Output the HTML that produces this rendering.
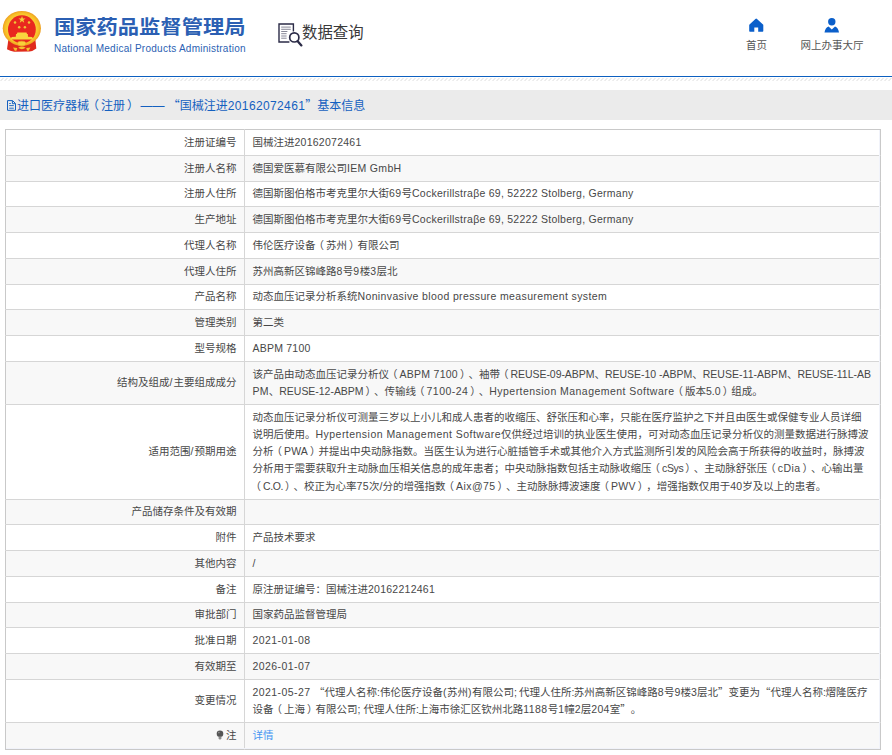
<!DOCTYPE html>
<html lang="zh-CN">
<head>
<meta charset="utf-8">
<title>国家药品监督管理局 数据查询</title>
<style>
html,body{margin:0;padding:0;background:#fff;}
body{width:892px;height:755px;overflow:hidden;position:relative;
  font-family:"Liberation Sans","Noto Sans CJK SC",sans-serif;font-size:10.5px;color:#474747;text-spacing-trim:space-all;}
.abs{position:absolute;white-space:nowrap;}
#emblem{left:2px;top:9px;width:42px;height:46px;}
#title{left:54px;top:13.6px;font-size:18.8px;font-weight:bold;color:#2b5fb3;letter-spacing:0;line-height:28px;transform:scaleX(1.133);transform-origin:0 0;}
#sub{left:54px;top:41.5px;font-size:10px;color:#2b5fb3;line-height:13px;letter-spacing:.25px;}
#qicon{left:276px;top:21px;width:28px;height:28px;}
#qtext{left:302px;top:21.8px;font-size:15.4px;color:#3a3a3a;line-height:22px;}
.nav{text-align:center;color:#555;font-size:10.5px;line-height:14px;}
#nav1{left:736px;top:38px;width:41px;}
#nav2{left:792px;top:38px;width:80px;}
#ico1{left:748px;top:17px;width:17px;height:16px;}
#ico2{left:823px;top:17px;width:18px;height:16px;}
#line{left:0;top:76px;width:892px;height:1px;background:#0d60c0;}
#hatch{left:0;top:78px;width:892px;height:3px;}
#bar{left:0;top:90px;width:892px;height:29.5px;background:#ebebeb;}
#crumb{left:17px;top:97.1px;font-size:12px;line-height:18px;color:#1460c0;}
#cicon{left:6px;top:99px;width:11px;height:13px;}
table{position:absolute;left:5px;top:129px;width:876px;border-collapse:collapse;border:1px solid #c9c9c9;table-layout:fixed;}
td{padding:3.75px 7.5px;line-height:17.25px;border-bottom:1px solid #d6d6d6;vertical-align:middle;white-space:nowrap;overflow:hidden;}
td.k{text-align:right;border-right:1px solid #d6d6d6;width:223px;}
tr:nth-child(even) td{background:#f8f8f8;}
tr:last-child td{border-bottom:none;padding-bottom:4.75px;}
a{color:#4495f2;text-decoration:none;}
.l{letter-spacing:.3px;}
.pl{position:relative;left:-2px;}
.pr{position:relative;left:2px;}
.q{font-family:"Noto Sans CJK SC",sans-serif;line-height:0;}
.bulb{width:8px;height:11px;vertical-align:-2.7px;margin-right:2.3px;}
</style>
</head>
<body>
<svg id="emblem" class="abs" viewBox="2 9 42 46">
<defs><radialGradient id="gg" cx="50%" cy="50%" r="50%"><stop offset="0.7" stop-color="#fad03a"/><stop offset="0.88" stop-color="#f7bf26"/><stop offset="1" stop-color="#ee9f22"/></radialGradient></defs>
<path d="M8.6 38 L35.2 38 L36.3 48.4 Q33 51 29.5 51.5 L14.2 51.7 Q10 51.2 7 49.3 Z" fill="#e02a1c"/>
<ellipse cx="21.85" cy="28.35" rx="19.1" ry="17.35" fill="url(#gg)"/>
<ellipse cx="21.9" cy="29.4" rx="13.9" ry="14.1" fill="#e9281f"/>
<polygon points="22,15.9 22.9,18.5 25.6,18.5 23.4,20.1 24.2,22.7 22,21.1 19.8,22.7 20.6,20.1 18.4,18.5 21.1,18.5" fill="#f5d23a"/>
<circle cx="15" cy="22.6" r="1.25" fill="#efc636"/><circle cx="29" cy="22.6" r="1.25" fill="#efc636"/>
<circle cx="19.2" cy="27.2" r="1.25" fill="#efc636"/><circle cx="24.9" cy="27.2" r="1.25" fill="#efc636"/>
<path d="M17.4 32.4 L26.5 32.4 L27 33.9 L27.8 34.1 L28 36.8 L32.1 36.9 L33.4 39.6 L10.4 39.6 L11.7 36.9 L15.8 36.8 L16 34.1 L16.8 33.9 Z" fill="#f9d53e"/>
<ellipse cx="21.7" cy="43.5" rx="4.1" ry="2.3" fill="#f8cf3a" stroke="#efa828" stroke-width="0.7"/>
<path d="M13.1 47.4 L17.3 47.9 L16.4 50.8 L14.8 50.8 Z M26.2 47.9 L30.4 47.4 L28.7 50.8 L27.1 50.8 Z M18.2 47.8 Q21.9 45.4 25.7 47.8 Q21.9 50.6 18.2 47.8 Z" fill="#f3c12e"/>
</svg>
<div id="title" class="abs">国家药品监督管理局</div>
<div id="sub" class="abs">National Medical Products Administration</div>
<svg id="qicon" class="abs" viewBox="276 21 28 28">
<path d="M293.4 31.4 V24 H279 V42 H289.4" fill="none" stroke="#2b2b47" stroke-width="1.4"/>
<g stroke="#55556a" stroke-width="0.7"><path d="M281.2 27.1H290.8M281.2 29.3H290.8M281.2 31.5H287.4M281.2 33.7H286.6M281.2 36H286.6M281.2 38.2H286.6"/></g>
<circle cx="294.3" cy="37.4" r="4.6" fill="#fff" stroke="#2b2b47" stroke-width="1.7"/>
<path d="M297.7 41.2 L301.4 45.4" stroke="#2b2b47" stroke-width="2.3" stroke-linecap="round"/>
</svg>
<div id="qtext" class="abs">数据查询</div>
<svg id="ico1" class="abs" viewBox="748 17 17 16">
<path d="M756.2 18.6 Q756.6 18.6 757 19 L763 24.6 Q763.4 25 763.3 25.6 V31 Q763.3 31.7 762.6 31.7 H758.2 V27.4 H754.3 V31.7 H749.9 Q749.2 31.7 749.2 31 V25.6 Q749.1 25 749.5 24.6 L755.4 19 Q755.8 18.6 756.2 18.6 Z" fill="#0b5fca"/>
</svg>
<svg id="ico2" class="abs" viewBox="823 17 18 16">
<circle cx="831.8" cy="21.7" r="3.7" fill="#0b5fca"/>
<path d="M828.6 26.4 L831.8 29.6 L835 26.4 Q838.2 27.4 839 32.4 H824.5 Q825.3 27.4 828.6 26.4 Z" fill="#0b5fca"/>
</svg>
<div id="nav1" class="abs nav">首页</div>
<div id="nav2" class="abs nav">网上办事大厅</div>
<div id="line" class="abs"></div>
<svg id="hatch" class="abs" viewBox="0 0 892 3">
<defs><pattern id="hp" width="4" height="3" patternUnits="userSpaceOnUse"><path d="M0.2 3.3 L3.8 -0.3 M-3.8 3.3 L-0.2 -0.3 M4.2 3.3 L7.8 -0.3" stroke="#d9d9d9" stroke-width="1"/></pattern></defs>
<rect width="892" height="3" fill="url(#hp)"/></svg>
<div id="bar" class="abs"></div>
<svg id="cicon" class="abs" viewBox="6 99 11 13">
<path d="M7.5 100.6 H12.6 L15.5 103.5 V110.3 H7.5 Z M12.4 100.8 V103.7 H15.3" fill="none" stroke="#1460c0" stroke-width="1"/>
<path d="M9.2 103.5H10.8M9.2 105.6H13.8M9.2 108.2H13.8" stroke="#1460c0" stroke-width="0.9"/>
</svg>
<div id="crumb" class="abs">进口医疗器械<span class="pl">（</span>注册<span class="pr">）</span> —— <span class="q">“</span>国械注进<span class="l" style="letter-spacing:0.37px">20162072461</span><span class="q">”</span>基本信息</div>
<table>
<tr><td class="k">注册证编号</td><td>国械注进<span class="l" style="letter-spacing:0.25px">20162072461</span></td></tr>
<tr><td class="k">注册人名称</td><td>德国爱医慕有限公司<span class="l" style="letter-spacing:0.32px">IEM GmbH</span></td></tr>
<tr><td class="k">注册人住所</td><td>德国斯图伯格市考克里尔大街<span class="l" style="letter-spacing:0.41px">69</span>号<span class="l" style="letter-spacing:0.26px">Cockerillstraβe 69, 52222 Stolberg, Germany</span></td></tr>
<tr><td class="k">生产地址</td><td>德国斯图伯格市考克里尔大街<span class="l" style="letter-spacing:0.41px">69</span>号<span class="l" style="letter-spacing:0.26px">Cockerillstraβe 69, 52222 Stolberg, Germany</span></td></tr>
<tr><td class="k">代理人名称</td><td>伟伦医疗设备<span class="pl">（</span>苏州<span class="pr">）</span>有限公司</td></tr>
<tr><td class="k">代理人住所</td><td>苏州高新区锦峰路<span class="l" style="letter-spacing:0.46px">8</span>号<span class="l" style="letter-spacing:0.46px">9</span>楼<span class="l" style="letter-spacing:0.46px">3</span>层北</td></tr>
<tr><td class="k">产品名称</td><td>动态血压记录分析系统<span class="l" style="letter-spacing:0.37px">Noninvasive blood pressure measurement system</span></td></tr>
<tr><td class="k">管理类别</td><td>第二类</td></tr>
<tr><td class="k">型号规格</td><td><span class="l" style="letter-spacing:0.22px">ABPM 7100</span></td></tr>
<tr><td class="k">结构及组成<span class="l" style="letter-spacing:1.18px">/</span>主要组成成分</td><td>该产品由动态血压记录分析仪<span class="pl">（</span><span class="l" style="letter-spacing:0.27px">ABPM 7100</span><span class="pr">）</span>、袖带<span class="pl">（</span><span class="l" style="letter-spacing:-0.05px">REUSE-09-ABPM</span>、<span class="l" style="letter-spacing:-0.02px">REUSE-10 -ABPM</span>、<span class="l" style="letter-spacing:0.03px">REUSE-11-ABPM</span>、<span class="l" style="letter-spacing:-0.04px">REUSE-11L-AB</span><br><span class="l" style="letter-spacing:0.28px">PM</span>、<span class="l" style="letter-spacing:-0.03px">REUSE-12-ABPM</span><span class="pr">）</span>、传输线<span class="pl">（</span><span class="l" style="letter-spacing:0.46px">7100-24</span><span class="pr">）</span>、<span class="l" style="letter-spacing:0.46px">Hypertension Management Software</span><span class="pl">（</span>版本<span class="l" style="letter-spacing:0.03px">5.0</span><span class="pr">）</span>组成。</td></tr>
<tr><td class="k">适用范围<span class="l" style="letter-spacing:1.18px">/</span>预期用途</td><td>动态血压记录分析仪可测量三岁以上小儿和成人患者的收缩压、舒张压和心率，只能在医疗监护之下并且由医生或保健专业人员详细<br>说明后使用。<span class="l" style="letter-spacing:0.47px">Hypertension Management Software</span>仅供经过培训的执业医生使用，可对动态血压记录分析仪的测量数据进行脉搏波<br>分析<span class="pl">（</span><span class="l" style="letter-spacing:0.16px">PWA</span><span class="pr">）</span>并提出中央动脉指数。当医生认为进行心脏插管手术或其他介入方式监测所引发的风险会高于所获得的收益时，脉搏波<br>分析用于需要获取升主动脉血压相关信息的成年患者；中央动脉指数包括主动脉收缩压<span class="pl">（</span><span class="l" style="letter-spacing:-0.37px">cSys</span><span class="pr">）</span>、主动脉舒张压<span class="pl">（</span><span class="l" style="letter-spacing:0.42px">cDia</span><span class="pr">）</span>、心输出量<br><span class="pl">（</span><span class="l" style="letter-spacing:-0.4px">C.O.</span><span class="pr">）</span>、校正为心率<span class="l" style="letter-spacing:0.41px">75</span>次<span class="l" style="letter-spacing:0.08px">/</span>分的增强指数<span class="pl">（</span><span class="l" style="letter-spacing:0.43px">Aix@75</span><span class="pr">）</span>、主动脉脉搏波速度<span class="pl">（</span><span class="l" style="letter-spacing:0.29px">PWV</span><span class="pr">）</span>，增强指数仅用于<span class="l" style="letter-spacing:0.16px">40</span>岁及以上的患者。</td></tr>
<tr><td class="k">产品储存条件及有效期</td><td></td></tr>
<tr><td class="k">附件</td><td>产品技术要求</td></tr>
<tr><td class="k">其他内容</td><td><span class="l">/</span></td></tr>
<tr><td class="k">备注</td><td>原注册证编号：国械注进<span class="l" style="letter-spacing:0.25px">20162212461</span></td></tr>
<tr><td class="k">审批部门</td><td>国家药品监督管理局</td></tr>
<tr><td class="k">批准日期</td><td><span class="l" style="letter-spacing:0.43px">2021-01-08</span></td></tr>
<tr><td class="k">有效期至</td><td><span class="l" style="letter-spacing:0.43px">2026-01-07</span></td></tr>
<tr><td class="k">变更情况</td><td><span class="l" style="letter-spacing:0.44px">2021-05-27 </span><span class="q">“</span>代理人名称<span class="l" style="letter-spacing:0.08px">:</span>伟伦医疗设备<span class="l" style="letter-spacing:0.5px">(</span>苏州<span class="l" style="letter-spacing:0.5px">)</span>有限公司<span class="l" style="letter-spacing:-0.42px">; </span>代理人住所<span class="l" style="letter-spacing:-0.62px">:</span>苏州高新区锦峰路<span class="l" style="letter-spacing:0.26px">8</span>号<span class="l" style="letter-spacing:0.26px">9</span>楼<span class="l" style="letter-spacing:0.26px">3</span>层北<span class="q">”</span>变更为<span class="q">“</span>代理人名称<span class="l" style="letter-spacing:-0.42px">:</span>熠隆医疗<br>设备<span class="pl">（</span>上海<span class="pr">）</span>有限公司<span class="l" style="letter-spacing:0.08px">; </span>代理人住所<span class="l" style="letter-spacing:-0.62px">:</span>上海市徐汇区钦州北路<span class="l" style="letter-spacing:0.43px">1188</span>号<span class="l" style="letter-spacing:0.26px">1</span>幢<span class="l" style="letter-spacing:0.26px">2</span>层<span class="l" style="letter-spacing:0.26px">204</span>室<span class="q">”</span>。</td></tr>
<tr><td class="k"><svg class="bulb" viewBox="0 0 8 11"><circle cx="4" cy="3.8" r="3.3" fill="#555"/><path d="M2.6 6.4 H5.4 V8.6 L4.6 9.6 H3.4 L2.6 8.6 Z" fill="#8a8a8a"/><circle cx="2.9" cy="2.6" r="0.8" fill="#999"/></svg>注</td><td><a>详情</a></td></tr>
</table>
<div class="abs" style="left:879px;top:130px;width:1px;height:619px;background:#f1f3fa"></div>
<div class="abs" style="left:6px;top:748px;width:874px;height:1px;background:#f1f3fa"></div>
</body>
</html>
